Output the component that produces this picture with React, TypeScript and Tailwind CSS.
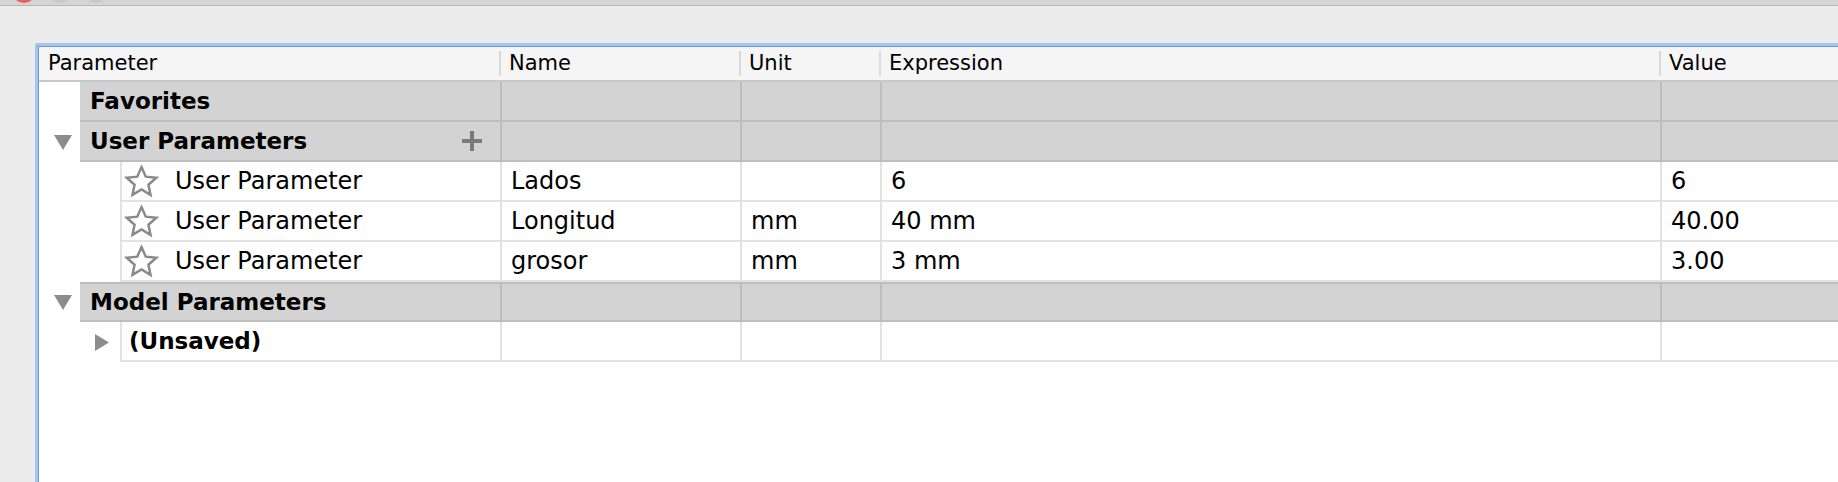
import React from "react";

const FONT = { fontFamily: '"DejaVu Sans", "Liberation Sans", sans-serif' };

function Star() {
  return (
    <svg width="35" height="33" viewBox="0 0 32 32" className="shrink-0">
      <polygon
        points="16,2 20.1,11.3 30.3,12.4 22.7,19.1 24.8,29 16,23.8 7.2,29 9.3,19.1 1.7,12.4 11.9,11.3"
        fill="none"
        stroke="#8a8a8a"
        strokeWidth="2.4"
        strokeLinejoin="miter"
      />
    </svg>
  );
}

function Down() {
  return (
    <svg width="18" height="15" viewBox="0 0 18 15">
      <polygon points="0,0 18,0 9,15" fill="#8c8c8c" />
    </svg>
  );
}

function Right() {
  return (
    <svg width="14" height="17" viewBox="0 0 14 17">
      <polygon points="0,0 14,8.5 0,17" fill="#8c8c8c" />
    </svg>
  );
}

function Plus() {
  return (
    <svg width="20" height="20" viewBox="0 0 20 20">
      <rect x="8" y="0" width="4" height="20" fill="#7b7b7b" />
      <rect x="0" y="8" width="20" height="4" fill="#7b7b7b" />
    </svg>
  );
}

function GroupRow({ label, expand, plus, topBorder }: { label: string; expand?: boolean; plus?: boolean; topBorder?: boolean }) {
  return (
    <div className="flex h-[40px]">
      <div className="w-[41px] shrink-0 flex items-center pl-[15px] bg-white">{expand && <Down />}</div>
      <div className={`flex-1 flex bg-[#d3d3d3] border-b-2 border-[#bebebe] ${topBorder ? "border-t-2" : ""}`}>
        <div className="w-[422px] shrink-0 border-r-2 border-[#bebebe] flex items-center pl-[10px] pr-[18px] justify-between">
          <span className="font-bold text-[23px] text-black">{label}</span>
          {plus && <Plus />}
        </div>
        <div className="w-[240px] shrink-0 border-r-2 border-[#bebebe]" />
        <div className="w-[140px] shrink-0 border-r-2 border-[#bebebe]" />
        <div className="w-[780px] shrink-0 border-r-2 border-[#bebebe]" />
        <div className="flex-1" />
      </div>
    </div>
  );
}

function ParamRow({ name, unit, expr, value }: { name: string; unit: string; expr: string; value: string }) {
  return (
    <div className="flex h-[40px]">
      <div className="w-[81px] shrink-0 bg-white" />
      <div className="flex-1 flex bg-white border-b-2 border-l-2 border-[#e2e2e2] text-[24px] text-black">
        <div className="w-[380px] shrink-0 border-r-2 border-[#e2e2e2] flex items-center pl-[2px]">
          <Star />
          <span className="ml-[16px]">User Parameter</span>
        </div>
        <div className="w-[240px] shrink-0 border-r-2 border-[#e2e2e2] flex items-center pl-[9px]">{name}</div>
        <div className="w-[140px] shrink-0 border-r-2 border-[#e2e2e2] flex items-center pl-[9px]">{unit}</div>
        <div className="w-[780px] shrink-0 border-r-2 border-[#e2e2e2] flex items-center pl-[9px]">{expr}</div>
        <div className="flex-1 flex items-center pl-[9px]">{value}</div>
      </div>
    </div>
  );
}

function UnsavedRow() {
  return (
    <div className="flex h-[40px]">
      <div className="w-[81px] shrink-0 bg-white flex items-center pl-[56px]">
        <Right />
      </div>
      <div className="flex-1 flex bg-white border-b-2 border-l-2 border-[#e2e2e2]">
        <div className="w-[380px] shrink-0 border-r-2 border-[#e2e2e2] flex items-center pl-[7px]">
          <span className="font-bold text-[23px] text-black">(Unsaved)</span>
        </div>
        <div className="w-[240px] shrink-0 border-r-2 border-[#e2e2e2]" />
        <div className="w-[140px] shrink-0 border-r-2 border-[#e2e2e2]" />
        <div className="w-[780px] shrink-0 border-r-2 border-[#e2e2e2]" />
        <div className="flex-1" />
      </div>
    </div>
  );
}

function HeaderCell({ label, w, sep }: { label: string; w?: string; sep?: boolean }) {
  return (
    <div className={`${w ?? "flex-1"} shrink-0 flex items-center h-full`}>
      {sep && <div className="w-[2px] h-[25px] bg-[#dadada] shrink-0" />}
      <span className={sep ? "pl-[8px]" : "pl-[9px]"}>{label}</span>
    </div>
  );
}

export default function App() {
  return (
    <div className="w-[1838px] h-[482px] bg-[#ececec] overflow-hidden flex flex-col" style={FONT}>
      <div className="h-[6px] shrink-0 bg-[#d6d4d6] border-b border-[#b5b5b5] overflow-hidden flex gap-[12px] pl-[12px]">
        <div className="w-[24px] h-[24px] rounded-full bg-[#ec5f57] -mt-[21px] shrink-0" />
        <div className="w-[24px] h-[24px] rounded-full bg-[#c9c7c9] -mt-[21px] shrink-0" />
        <div className="w-[24px] h-[24px] rounded-full bg-[#c9c7c9] -mt-[21px] shrink-0" />
      </div>
      <div className="flex-1 pt-[37px] pl-[35px]">
        <div className="h-full border-t-[3px] border-l-[3px] border-[#a3c5f0] rounded-tl-[3px]">
          <div className="h-full border-t border-l border-[#7399d0] bg-white flex flex-col">
            <div className="h-[35px] shrink-0 bg-[#f5f5f5] border-b-2 border-[#c9c9c9] flex text-[21px] text-black">
              <HeaderCell label="Parameter" w="w-[460px]" />
              <HeaderCell label="Name" w="w-[240px]" sep />
              <HeaderCell label="Unit" w="w-[140px]" sep />
              <HeaderCell label="Expression" w="w-[780px]" sep />
              <HeaderCell label="Value" sep />
            </div>
            <GroupRow label="Favorites" />
            <GroupRow label="User Parameters" expand plus />
            <ParamRow name="Lados" unit="" expr="6" value="6" />
            <ParamRow name="Longitud" unit="mm" expr="40 mm" value="40.00" />
            <ParamRow name="grosor" unit="mm" expr="3 mm" value="3.00" />
            <GroupRow label="Model Parameters" expand topBorder />
            <UnsavedRow />
          </div>
        </div>
      </div>
    </div>
  );
}
